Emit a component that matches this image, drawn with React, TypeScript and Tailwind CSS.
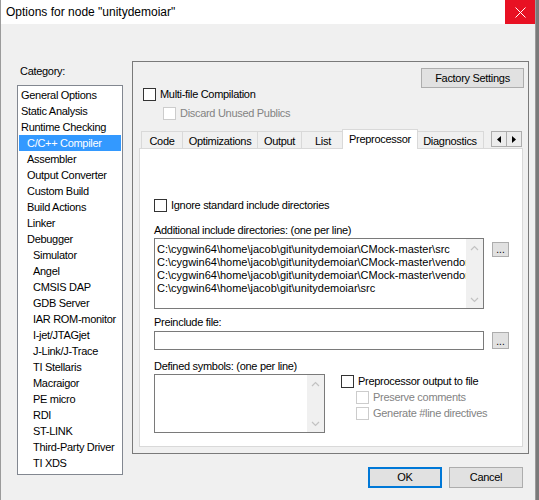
import React from "react";

type Category = { label: string; level: 0 | 1 | 2; selected?: boolean };

const categories: Category[] = [
  { label: "General Options", level: 0 },
  { label: "Static Analysis", level: 0 },
  { label: "Runtime Checking", level: 0 },
  { label: "C/C++ Compiler", level: 1, selected: true },
  { label: "Assembler", level: 1 },
  { label: "Output Converter", level: 1 },
  { label: "Custom Build", level: 1 },
  { label: "Build Actions", level: 1 },
  { label: "Linker", level: 1 },
  { label: "Debugger", level: 1 },
  { label: "Simulator", level: 2 },
  { label: "Angel", level: 2 },
  { label: "CMSIS DAP", level: 2 },
  { label: "GDB Server", level: 2 },
  { label: "IAR ROM-monitor", level: 2 },
  { label: "I-jet/JTAGjet", level: 2 },
  { label: "J-Link/J-Trace", level: 2 },
  { label: "TI Stellaris", level: 2 },
  { label: "Macraigor", level: 2 },
  { label: "PE micro", level: 2 },
  { label: "RDI", level: 2 },
  { label: "ST-LINK", level: 2 },
  { label: "Third-Party Driver", level: 2 },
  { label: "TI XDS", level: 2 },
];

// the list box is narrower than the longer paths, so they get clipped like in the dialog
const includeDirs = [
  "C:\\cygwin64\\home\\jacob\\git\\unitydemoiar\\CMock-master\\src",
  "C:\\cygwin64\\home\\jacob\\git\\unitydemoiar\\CMock-master\\vendor\\unity\\src",
  "C:\\cygwin64\\home\\jacob\\git\\unitydemoiar\\CMock-master\\vendor\\c_exception\\lib",
  "C:\\cygwin64\\home\\jacob\\git\\unitydemoiar\\src",
];

const levelPadding = ["pl-[2px]", "pl-[8px]", "pl-[14px]"];

function Checkbox({ label, disabled }: { label: string; disabled?: boolean }) {
  return (
    <div className="flex h-[13px] items-center">
      <span
        className={`h-[13px] w-[13px] shrink-0 border ${
          disabled ? "border-[#cccccc] bg-white" : "border-[#333333] bg-white"
        }`}
      />
      <span className={`ml-[4px] whitespace-nowrap ${disabled ? "text-[#838383]" : "text-black"}`}>{label}</span>
    </div>
  );
}

function DisabledScrollbar() {
  return (
    <div className="flex h-full w-[17px] shrink-0 flex-col justify-between bg-[#f0f0f0]">
      <div className="flex h-[17px] items-center justify-center">
        <svg width="9" height="6" viewBox="0 0 9 6">
          <path d="M1 5 L4.5 1.5 L8 5" fill="none" stroke="#c2c2c2" strokeWidth="1.2" />
        </svg>
      </div>
      <div className="flex h-[17px] items-center justify-center">
        <svg width="9" height="6" viewBox="0 0 9 6">
          <path d="M1 1 L4.5 4.5 L8 1" fill="none" stroke="#c2c2c2" strokeWidth="1.2" />
        </svg>
      </div>
    </div>
  );
}

function EllipsisButton({ className }: { className: string }) {
  return (
    <div
      className={`flex w-[17px] items-end justify-center border border-[#adadad] bg-[#e1e1e1] pb-[1px] text-[10px] leading-[10px] tracking-normal ${className}`}
    >
      ...
    </div>
  );
}

function Tab({ label, width, selected }: { label: string; width: string; selected?: boolean }) {
  if (selected) {
    return (
      <div
        className={`relative z-10 -mx-[2px] -mb-px h-[20px] ${width} border-l border-r border-t border-[#d9d9d9] bg-white pt-[3px] text-center`}
      >
        {label}
      </div>
    );
  }
  return (
    <div className={`h-[17px] ${width} border-l border-t border-[#d9d9d9] pt-[3px] text-center whitespace-nowrap`}>
      {label}
    </div>
  );
}

export default function App() {
  return (
    <div className="flex h-[500px] w-[539px] overflow-hidden font-['Liberation_Sans',Arial,sans-serif] text-[11px] leading-[13px] tracking-[-0.3px] text-black">
      <div className="flex h-full w-[536px] shrink-0 flex-col border-l border-r border-[#9b9b9b] bg-[#f0f0f0]">
        {/* title bar */}
        <div className="flex h-[24px] shrink-0 items-center bg-white">
          <div className="flex-1 pl-[5px] text-[12px] tracking-normal">Options for node "unitydemoiar"</div>
          <div className="flex h-[24px] w-[30px] items-center justify-center bg-[#e81123]">
            <svg width="11" height="11" viewBox="0 0 11 11">
              <path d="M0.5 0.5 L10.5 10.5 M10.5 0.5 L0.5 10.5" stroke="white" strokeWidth="1" />
            </svg>
          </div>
        </div>

        <div className="flex items-start pl-[16px] pt-[37px]">
          {/* category list */}
          <div className="mt-[4px] flex flex-col">
            <div className="h-[13px] pl-[3px]">Category:</div>
            <div className="mt-[7px] h-[390px] w-[106px] border border-[#828790] bg-white pt-[1px]">
              {categories.map((c) => (
                <div
                  key={c.label}
                  className={`mx-[1px] h-[16px] whitespace-nowrap leading-[16px] ${levelPadding[c.level]} ${
                    c.selected ? "bg-[#3399ff] text-white" : ""
                  }`}
                >
                  {c.label}
                </div>
              ))}
            </div>
          </div>

          {/* options */}
          <div className="ml-[9px] flex flex-col">
            <div className="flex h-[393px] w-[397px] flex-col border border-[#7a7a7a]">
              <div className="mt-[6px] flex justify-end pr-[4px]">
                <div className="flex h-[20px] w-[103px] items-center justify-center border border-[#adadad] bg-[#e1e1e1]">
                  Factory Settings
                </div>
              </div>
              <div className="pl-[10px]">
                <Checkbox label="Multi-file Compilation" />
              </div>
              <div className="mt-[6px] pl-[30px]">
                <Checkbox label="Discard Unused Publics" disabled />
              </div>

              <div className="mt-[9px] flex flex-col pl-[6px] pr-[5px]">
                <div className="flex h-[19px] items-end pl-[2px]">
                  <div className="flex items-end">
                    <Tab label="Code" width="w-[41px]" />
                    <Tab label="Optimizations" width="w-[75px]" />
                    <Tab label="Output" width="w-[44px]" />
                    <Tab label="List" width="w-[43px]" />
                    <Tab label="Preprocessor" width="w-[76px]" selected />
                    <div className="h-[17px] w-[68px] border-l border-r border-t border-[#d9d9d9] pt-[3px] text-center">
                      Diagnostics
                    </div>
                  </div>
                  <div className="mb-[1px] ml-[7px] mt-[2px] flex h-[16px] w-[31px] self-start border border-[#adadad] bg-[#ececec]">
                    <div className="flex flex-1 items-center justify-center border-r border-[#adadad]">
                      <svg width="4" height="7" viewBox="0 0 4 7">
                        <path d="M4 0 L0 3.5 L4 7 Z" fill="black" />
                      </svg>
                    </div>
                    <div className="flex flex-1 items-center justify-center">
                      <svg width="4" height="7" viewBox="0 0 4 7">
                        <path d="M0 0 L4 3.5 L0 7 Z" fill="black" />
                      </svg>
                    </div>
                  </div>
                </div>

                <div className="flex h-[299px] flex-col border border-[#d9d9d9] bg-white pl-[14px] pt-[50px]">
                  <Checkbox label="Ignore standard include directories" />
                  <div className="mt-[12px] h-[13px]">Additional include directories: (one per line)</div>
                  <div className="mt-[1px] flex items-start">
                    <div className="flex h-[71px] w-[330px] border border-[#7a7a7a] bg-white">
                      <div className="flex-1 overflow-hidden whitespace-nowrap pl-[2px] pt-[4px] tracking-normal">
                        {includeDirs.map((d) => (
                          <div key={d} className="h-[13px]">
                            {d}
                          </div>
                        ))}
                      </div>
                      <DisabledScrollbar />
                    </div>
                    <EllipsisButton className="ml-[8px] mt-[4px] h-[15px]" />
                  </div>

                  <div className="mt-[7px] h-[13px]">Preinclude file:</div>
                  <div className="mt-[2px] flex items-start">
                    <div className="h-[19px] w-[330px] border border-[#7a7a7a] bg-white" />
                    <EllipsisButton className="ml-[8px] mt-[1px] h-[17px]" />
                  </div>

                  <div className="mt-[10px] h-[13px]">Defined symbols: (one per line)</div>
                  <div className="mt-[1px] flex items-start">
                    <div className="flex h-[59px] w-[171px] border border-[#7a7a7a] bg-white">
                      <div className="flex-1" />
                      <DisabledScrollbar />
                    </div>
                    <div className="ml-[16px] mt-[1px] flex flex-col">
                      <Checkbox label="Preprocessor output to file" />
                      <div className="mt-[3px] pl-[15px]">
                        <Checkbox label="Preserve comments" disabled />
                      </div>
                      <div className="mt-[3px] pl-[15px]">
                        <Checkbox label="Generate #line directives" disabled />
                      </div>
                    </div>
                  </div>
                </div>
              </div>
            </div>

            <div className="mt-[13px] flex justify-end gap-[7px] pr-[6px]">
              <div className="flex h-[21px] w-[74px] items-center justify-center border-2 border-[#0078d7] bg-[#e1e1e1]">
                OK
              </div>
              <div className="flex h-[21px] w-[74px] items-center justify-center border border-[#adadad] bg-[#e1e1e1]">
                Cancel
              </div>
            </div>
          </div>
        </div>
      </div>
      <div className="flex-1 bg-[#7a7a7a]" />
    </div>
  );
}
